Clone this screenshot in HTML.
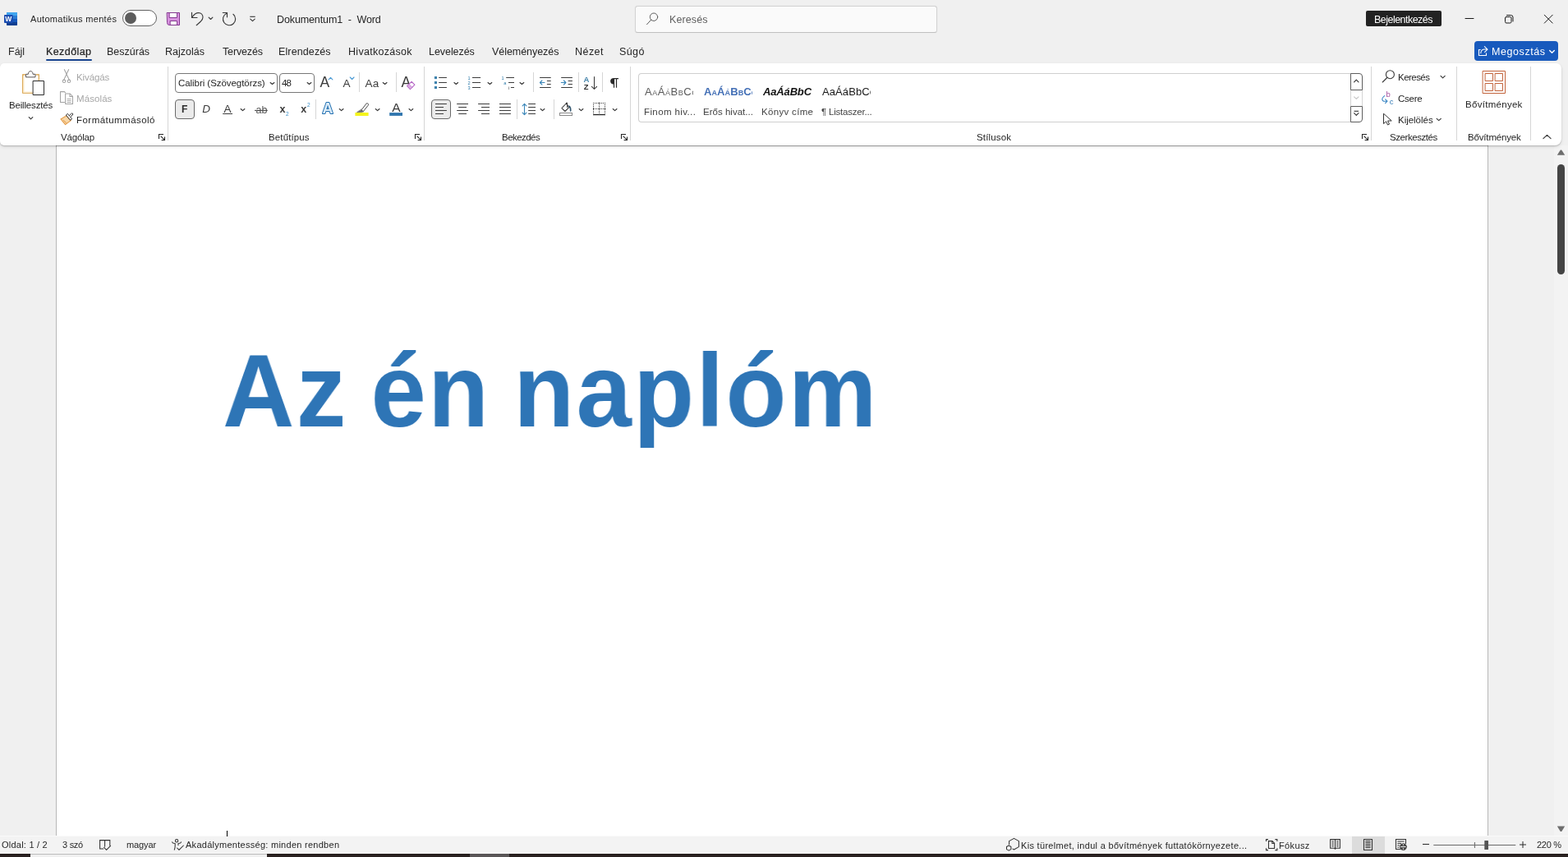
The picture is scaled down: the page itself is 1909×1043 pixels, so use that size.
<!DOCTYPE html>
<html lang="hu">
<head>
<meta charset="utf-8">
<title>Dokumentum1 - Word</title>
<style>
*{box-sizing:border-box;margin:0;padding:0}
html,body{width:1909px;height:1043px;overflow:hidden}
body{position:relative;background:#f0f0f0;font-family:"Liberation Sans",sans-serif;font-size:12px;color:#242424}
.a{position:absolute}
.t{position:absolute;white-space:nowrap;line-height:20px;height:20px;will-change:transform}
svg{position:absolute;overflow:visible;will-change:transform}
#ribbon{left:0;top:77px;width:1901px;height:100px;background:#fff;border-radius:5px 6px 8px 5px;box-shadow:0 1px 1.5px rgba(0,0,0,.2),0 2px 4px rgba(0,0,0,.09)}
.gsep{position:absolute;top:81px;width:1px;height:90px;background:#d6d6d6}
.sep{position:absolute;width:1px;height:24px;background:#d6d6d6}
#docbg{left:0;top:177px;width:1909px;height:841px;background:#f0f0f0}
#page{left:68px;top:170px;width:1744px;height:848px;background:#fff;border-left:1px solid #b8b8b8;border-right:1px solid #b8b8b8}
#status{left:0;top:1017px;width:1909px;height:22px;background:#f3f3f3;border-top:1px solid #fafafa;border-bottom:1px solid #fbfbfb}
#strip{left:0;top:1039px;width:1909px;height:4px;background:#292120}
.box{position:absolute;border:1px solid #787878;border-radius:4px;background:#fff}
.sel{position:absolute;border:1px solid #6a6a6a;border-radius:4px;background:#ebebeb}
.big{position:absolute;will-change:transform;white-space:nowrap;font-weight:bold;color:#2e75b6;line-height:160px;height:160px}
</style>
</head>
<body>
<div class="a" id="docbg"></div>
<div class="a" id="page"></div>
<div class="a" id="scrolltrack" style="left:1892px;top:177px;width:17px;height:841px;background:#f3f3f3"></div>
<div class="a" id="thumb" style="left:1896px;top:200px;width:9px;height:134px;background:#454545;border-radius:4.5px"></div>
<div class="a" id="ribbon"></div>
<div class="a" id="pagetop" style="left:68px;top:177px;width:1744px;height:1px;background:rgba(0,0,0,.22)"></div>
<div class="a" id="status"></div>
<div class="a" id="strip"></div>

<div class="a" style="left:37px;top:1039px;width:288px;height:4px;background:#efefef;border-top:1px solid #b9b9b9"></div>
<div class="a" style="left:572px;top:1039px;width:48px;height:4px;background:#5a5657"></div>
<div class="a" style="left:1646px;top:1018px;width:40px;height:21px;background:#dcdcdc"></div>
<div class="a" style="left:773px;top:7px;width:368px;height:33px;background:#fafafa;border:1px solid #d2d2d2;border-bottom-color:#c0c0c0;border-radius:3.5px;box-shadow:0 0 1px rgba(0,0,0,.10)"></div>
<div class="a" style="left:149px;top:12px;width:42px;height:20px;border:1px solid #616161;border-radius:10px;background:#fff"></div>
<div class="a" style="left:152px;top:15px;width:14px;height:14px;border-radius:7px;background:#5c5c5c"></div>
<div class="a" style="left:1663px;top:13px;width:92px;height:19px;background:#222;border-radius:2px"></div>
<div class="a" style="left:1795px;top:50px;width:102px;height:24px;background:#185abd;border-radius:4px"></div>
<div class="a" style="left:56px;top:72px;width:56px;height:2px;background:#17448f;border-radius:1px"></div>
<div class="gsep" style="left:204px"></div>
<div class="gsep" style="left:516px"></div>
<div class="gsep" style="left:767px"></div>
<div class="gsep" style="left:1669px"></div>
<div class="gsep" style="left:1773px"></div>
<div class="gsep" style="left:1863px"></div>
<div class="sep" style="left:437px;top:88px"></div>
<div class="sep" style="left:482px;top:88px"></div>
<div class="sep" style="left:384px;top:121px"></div>
<div class="sep" style="left:649px;top:88px"></div>
<div class="sep" style="left:704px;top:88px"></div>
<div class="sep" style="left:733px;top:88px"></div>
<div class="sep" style="left:629px;top:121px"></div>
<div class="sep" style="left:674px;top:121px"></div>
<div class="box" style="left:213px;top:89px;width:125px;height:24px"></div>
<div class="box" style="left:340px;top:89px;width:43px;height:24px"></div>
<div class="sel" style="left:213px;top:121px;width:24px;height:24px"></div>
<div class="sel" style="left:525px;top:121px;width:24px;height:24px"></div>
<div class="a" style="left:777px;top:89px;width:868px;height:60px;border:1px solid #cfcfcf;border-right:none;border-radius:4px 0 0 4px;background:#fff"></div>
<div class="a" style="left:1644px;top:109px;width:15px;height:21px;border-left:1px solid #d4d4d4;border-right:1px solid #d4d4d4;background:#fff"></div>
<div class="a" style="left:1644px;top:89px;width:15px;height:21px;border:1px solid #5e5e5e;border-radius:0 4px 0 0;background:#fff"></div>
<div class="a" style="left:1644px;top:129px;width:15px;height:20px;border:1px solid #5e5e5e;border-radius:0 0 4px 0;background:#fff"></div>
<div class="a" style="left:276px;top:1011px;width:1px;height:7px;background:#000"></div>

<span class="t" id="autosave" style="left:36.80px;top:13.19px;font-size:11px;color:#242424;letter-spacing:0.308px;">Automatikus mentés</span>
<span class="t" id="title" style="left:336.80px;top:13.67px;font-size:12.5px;color:#242424;letter-spacing:-0.114px;white-space:pre;">Dokumentum1  -  Word</span>
<span class="t" id="searchph" style="left:814.80px;top:13.67px;font-size:12.5px;color:#616161;letter-spacing:0.105px;">Keresés</span>
<span class="t" id="signin" style="left:1672.80px;top:13.67px;font-size:12.5px;color:#ffffff;letter-spacing:-0.525px;">Bejelentkezés</span>
<span class="t" id="tab0" style="left:9.90px;top:52.67px;font-size:12.5px;color:#242424;">Fájl</span>
<span class="t" id="tab1" style="left:55.80px;top:52.67px;font-size:12.5px;color:#242424;letter-spacing:0.412px;-webkit-text-stroke:0.22px #1c1c1c;">Kezdőlap</span>
<span class="t" id="tab2" style="left:130.00px;top:52.67px;font-size:12.5px;color:#242424;">Beszúrás</span>
<span class="t" id="tab3" style="left:201.00px;top:52.67px;font-size:12.5px;color:#242424;letter-spacing:0.013px;">Rajzolás</span>
<span class="t" id="tab4" style="left:270.60px;top:52.67px;font-size:12.5px;color:#242424;letter-spacing:-0.154px;">Tervezés</span>
<span class="t" id="tab5" style="left:339.20px;top:52.67px;font-size:12.5px;color:#242424;letter-spacing:0.120px;">Elrendezés</span>
<span class="t" id="tab6" style="left:424.20px;top:52.67px;font-size:12.5px;color:#242424;letter-spacing:0.286px;">Hivatkozások</span>
<span class="t" id="tab7" style="left:522.40px;top:52.67px;font-size:12.5px;color:#242424;letter-spacing:-0.056px;">Levelezés</span>
<span class="t" id="tab8" style="left:599.00px;top:52.67px;font-size:12.5px;color:#242424;letter-spacing:-0.049px;">Véleményezés</span>
<span class="t" id="tab9" style="left:699.90px;top:52.67px;font-size:12.5px;color:#242424;letter-spacing:0.450px;">Nézet</span>
<span class="t" id="tab10" style="left:754.40px;top:52.67px;font-size:12.5px;color:#242424;letter-spacing:0.390px;">Súgó</span>
<span class="t" id="share" style="left:1815.50px;top:52.67px;font-size:12.5px;color:#ffffff;letter-spacing:0.584px;">Megosztás</span>
<span class="t" id="paste" style="left:10.76px;top:118.02px;font-size:11.5px;color:#242424;letter-spacing:-0.174px;">Beillesztés</span>
<span class="t" id="cut" style="left:93.10px;top:84.02px;font-size:11.5px;color:#a6a6a6;letter-spacing:-0.090px;">Kivágás</span>
<span class="t" id="copy" style="left:93.10px;top:110.02px;font-size:11.5px;color:#a6a6a6;letter-spacing:0.090px;">Másolás</span>
<span class="t" id="fmtp" style="left:92.80px;top:136.02px;font-size:11.5px;color:#242424;letter-spacing:0.463px;">Formátummásoló</span>
<span class="t" id="g1" style="left:74.20px;top:157.02px;font-size:11.5px;color:#242424;letter-spacing:-0.180px;">Vágólap</span>
<span class="t" id="font" style="left:217.10px;top:91.02px;font-size:11.5px;color:#242424;letter-spacing:-0.053px;">Calibri (Szövegtörzs)</span>
<span class="t" id="fsize" style="left:343.00px;top:91.02px;font-size:11.5px;color:#242424;letter-spacing:-0.990px;">48</span>
<span class="t" id="g2" style="left:327.00px;top:157.02px;font-size:11.5px;color:#242424;letter-spacing:0.124px;">Betűtípus</span>
<span class="t" id="g3" style="left:610.80px;top:157.02px;font-size:11.5px;color:#242424;letter-spacing:-0.540px;">Bekezdés</span>
<span class="t" id="g4" style="left:1188.90px;top:157.02px;font-size:11.5px;color:#242424;letter-spacing:0.154px;">Stílusok</span>
<span class="t" id="g5" style="left:1692.20px;top:157.02px;font-size:11.5px;color:#242424;letter-spacing:-0.432px;">Szerkesztés</span>
<span class="t" id="g6" style="left:1786.80px;top:157.02px;font-size:11.5px;color:#242424;letter-spacing:-0.162px;">Bővítmények</span>
<span class="t" id="addins" style="left:1783.80px;top:117.02px;font-size:11.5px;color:#242424;letter-spacing:0.288px;">Bővítmények</span>
<span class="t" id="find" style="left:1701.50px;top:84.02px;font-size:11.5px;color:#242424;letter-spacing:-0.540px;">Keresés</span>
<span class="t" id="repl" style="left:1702.00px;top:110.02px;font-size:11.5px;color:#242424;letter-spacing:-0.270px;">Csere</span>
<span class="t" id="sel" style="left:1701.90px;top:136.02px;font-size:11.5px;color:#242424;letter-spacing:-0.022px;">Kijelölés</span>
<span class="t" id="s1" style="left:783.50px;top:126.02px;font-size:11.5px;color:#444444;letter-spacing:0.393px;">Finom hiv...</span>
<span class="t" id="s2" style="left:856.20px;top:126.02px;font-size:11.5px;color:#444444;letter-spacing:0.016px;">Erős hivat...</span>
<span class="t" id="s3" style="left:927.20px;top:126.02px;font-size:11.5px;color:#444444;letter-spacing:0.320px;">Könyv címe</span>
<span class="t" id="s4" style="left:1000.40px;top:126.02px;font-size:11.5px;color:#444444;letter-spacing:-0.208px;">¶ Listaszer...</span>
<span class="t" id="st1" style="left:1.80px;top:1018.19px;font-size:11px;color:#262626;letter-spacing:0.229px;">Oldal: 1 / 2</span>
<span class="t" id="st2" style="left:75.90px;top:1018.19px;font-size:11px;color:#262626;letter-spacing:-0.269px;">3 szó</span>
<span class="t" id="st3" style="left:153.80px;top:1018.19px;font-size:11px;color:#262626;letter-spacing:-0.108px;">magyar</span>
<span class="t" id="st4" style="left:225.90px;top:1018.19px;font-size:11px;color:#262626;letter-spacing:0.273px;">Akadálymentesség: minden rendben</span>
<span class="t" id="st5" style="left:1242.80px;top:1019.19px;font-size:11px;color:#262626;letter-spacing:0.311px;">Kis türelmet, indul a bővítmények futtatókörnyezete...</span>
<span class="t" id="st6" style="left:1557.20px;top:1019.19px;font-size:11px;color:#262626;letter-spacing:0.360px;">Fókusz</span>
<span class="t" id="st7" style="left:1871.20px;top:1018.19px;font-size:11px;color:#262626;letter-spacing:-0.270px;">220 %</span>
<span class="big" id="big" style="left:270.80px;top:395.84px;font-size:126px;letter-spacing:2.50px;word-spacing:-8.50px;transform:scaleX(0.96);transform-origin:0 0">Az én naplóm</span>
<div class="a pv" style="left:785.4px;top:98px;width:58.8px;height:24px;overflow:hidden"><span class="t" style="left:0;top:3.5px;font-size:13px;color:#595959;font-variant:small-caps;letter-spacing:.55px">AaÁáBbCcDd</span></div>
<div class="a pv" style="left:857.4px;top:98px;width:58.8px;height:24px;overflow:hidden"><span class="t" style="left:0;top:3.5px;font-size:13px;color:#4470b6;font-variant:small-caps;font-weight:bold;letter-spacing:.1px">AaÁáBbCcDd</span></div>
<div class="a pv" style="left:929.4px;top:98px;width:58.8px;height:24px;overflow:hidden"><span class="t" style="left:0;top:3.5px;font-size:13px;color:#111;font-weight:bold;font-style:italic;letter-spacing:-.15px">AaÁáBbCcDd</span></div>
<div class="a pv" style="left:1001.4px;top:98px;width:58.8px;height:24px;overflow:hidden"><span class="t" style="left:0;top:3.5px;font-size:13px;color:#1a1a1a;letter-spacing:.1px">AaÁáBbCcDd</span></div>
<!-- title bar icons -->
<svg style="left:0;top:0" width="1909" height="46" viewBox="0 0 1909 46" fill="none" stroke-linecap="round" stroke-linejoin="round">
<rect x="8" y="15" width="13" height="16" rx="1" fill="#2b7cd3"/>
<path d="M8 19 V16 Q8 15 9 15 H20 Q21 15 21 16 V19 Z" fill="#41a5ee"/>
<rect x="8" y="23" width="13" height="4" fill="#185abd"/>
<path d="M8 27 H21 V30 Q21 31 20 31 H9 Q8 31 8 30 Z" fill="#103f91"/>
<rect x="5" y="18" width="10.7" height="10" rx="1" fill="#1b4db0"/>
<text x="10.3" y="26.3" font-family="Liberation Sans, sans-serif" font-size="8.5" font-weight="bold" fill="#fff" text-anchor="middle">W</text>
<!-- save -->
<path d="M203.5 15.5 H218.5 V30.5 H206.2 Q203.5 30.5 203.5 27.8 Z" fill="#d892df" stroke="#843b90" stroke-width="1"/>
<rect x="206.5" y="15.5" width="9" height="6" fill="#fff" stroke="#843b90" stroke-width="1"/>
<rect x="207.5" y="25.5" width="8" height="5" fill="#fff" stroke="#843b90" stroke-width="1"/>
<!-- undo -->
<g stroke="#3a3a3a" stroke-width="1.15">
<path d="M233.5 15.3 V21.5 H240"/>
<path d="M233.8 21.2 C236 17.6 239 15.6 241.8 15.6 C244.8 15.6 247 18 247 21 C247 23.3 245.8 24.8 244.2 26.3 L239.2 30.7"/>
<path d="M254.1 21.2 L256.5 23.5 L258.9 21.2"/>
<!-- redo -->
<path d="M271.3 15.5 H276.5 V20.8"/>
<path d="M283.9 17.3 A7.6 7.6 0 1 1 275.6 16.4"/>
<!-- customize -->
<path d="M304.3 20.3 H310.7" stroke-linecap="butt"/>
<path d="M304.8 23.1 L307.5 25.7 L310.2 23.1"/>
</g>
<!-- search icon in box -->
<g stroke="#5e5e5e" stroke-width="1">
<circle cx="796" cy="20.7" r="4.7"/>
<path d="M792.6 24.2 L787.5 29.8"/>
</g>
<!-- window controls -->
<g stroke="#1a1a1a" stroke-width="1">
<path d="M1784 22.5 H1794"/>
<rect x="1832.5" y="20.5" width="7.5" height="7.5" rx="1.5"/>
<path d="M1834.5 18.5 H1839.5 Q1842 18.5 1842 21 V26"/>
<path d="M1880.3 18.2 L1890.2 28.1 M1890.2 18.2 L1880.3 28.1"/>
</g>
</svg>
<!-- ribbon: clipboard group -->
<svg style="left:0;top:77px" width="210" height="100" viewBox="0 77 210 100" fill="none" stroke-linecap="round" stroke-linejoin="round">
<!-- paste -->
<path d="M31 90.9 H27.7 V113.3 H40.5 M43.5 90.9 H47.3 V98" stroke="#d69c3c" stroke-width="1.1" stroke-linecap="butt" stroke-linejoin="miter"/>
<path d="M28.9 92 V112.2 H40" stroke="#fce9c6" stroke-width="1.2" stroke-linecap="butt"/>
<path d="M31.5 93.5 V90.3 H34.3 C34.3 88 35.6 86.6 37.2 86.6 C38.8 86.6 40.1 88 40.1 90.3 H43 V93.5 Z" fill="#fff" stroke="#5a5555" stroke-width="1"/>
<rect x="40.5" y="98.5" width="13" height="17" fill="#fff" stroke="#2e2e2e" stroke-width="1"/>
<path d="M35.2 142.6 L37.5 144.9 L39.8 142.6" stroke="#333" stroke-width="1.1"/>
<!-- cut -->
<g stroke="#a3a3a3" stroke-width="1.05">
<path d="M78.3 84.6 L84.3 97.2 M83.7 84.6 L77.7 97.2"/>
<circle cx="78" cy="98.8" r="1.7"/>
<circle cx="84" cy="98.8" r="1.7"/>
</g>
<!-- copy -->
<g stroke="#a3a3a3" stroke-width="1.05">
<path d="M78.5 124.5 H73.5 V111.6 H78.5 L79.6 112.8"/>
<path d="M79.6 114 H85.3 L88.5 117.3 V126.5 H79.6 Z" fill="#fff"/>
<path d="M85 114.2 V117.5 H88.3"/>
<path d="M82 120.5 H86.2 M82 122.5 H86.2 M82 124.5 H86.2" stroke-width=".9"/>
</g>
<!-- format painter -->
<path d="M74 145 L81.2 140.6 L86.2 146.6 L79.6 151.6 Z" fill="#f8d7a8" stroke="#e39a45" stroke-width="1.1"/>
<path d="M77 146.2 L80.5 149.4" stroke="#e39a45" stroke-width="1"/>
<path d="M80.6 139.8 L82.4 138.4 L87.6 144.7 L85.9 146.1 Z" fill="#fff" stroke="#333" stroke-width="1"/>
<path d="M84.3 140.9 L87.6 137.6 L89 139 L85.8 142.4" fill="#fff" stroke="#333" stroke-width="1"/>
<!-- launcher -->
<g stroke="#262626" stroke-width="1.1" stroke-linecap="butt" stroke-linejoin="miter">
<path d="M193.5 169 V163.5 H199"/>
<path d="M195.6 165.6 L200.2 170.2 M200.5 166.6 V170.5 H196.6"/>
</g>
</svg>

<!-- ribbon: font + paragraph + editing icons -->
<svg style="left:0;top:77px" width="1909" height="100" viewBox="0 77 1909 100" fill="none" stroke-linecap="round" stroke-linejoin="round">
<path d="M329.1 100.5 L331.5 102.5 L333.9 100.5" stroke="#333" stroke-width="1.1"/>
<path d="M374.1 100.5 L376.5 102.5 L378.9 100.5" stroke="#333" stroke-width="1.1"/>
<text x="389.6" y="105.7" font-family="Liberation Sans, sans-serif" font-size="17.5" fill="#3b3b3b">A</text>
<path d="M400.1 96.8 L402.5 94.3 L404.9 96.8" stroke="#4a9ad4" stroke-width="1.1"/>
<text x="417.4" y="105.7" font-family="Liberation Sans, sans-serif" font-size="13.5" fill="#3b3b3b">A</text>
<path d="M426.2 94.0 L428.6 96.5 L431.0 94.0" stroke="#4a9ad4" stroke-width="1.1"/>
<text x="444.4" y="105.7" font-family="Liberation Sans, sans-serif" font-size="13.5" fill="#3b3b3b" letter-spacing="0.4">Aa</text>
<path d="M466.2 100.5 L468.6 102.5 L471.0 100.5" stroke="#333" stroke-width="1.1"/>
<text x="488.4" y="105.7" font-family="Liberation Sans, sans-serif" font-size="17.5" fill="#3b3b3b">A</text>
<path d="M495.6 104.6 L501.1 99.3 L504.9 103.2 L499.4 108.6 Z" fill="#fff" stroke="#b565c5" stroke-width="1.1"/>
<path d="M497.9 102.4 L501.7 106.3" stroke="#b565c5" stroke-width="1"/>
<path d="M496.4 104.7 L498 103.2 L500.9 106.2 L499.4 107.7 Z" fill="#d9a3e0" stroke="none"/>
<text x="221.1" y="137" font-family="Liberation Sans, sans-serif" font-size="13.5" font-weight="bold" fill="#2b2b2b" textLength="7.4" lengthAdjust="spacingAndGlyphs">F</text>
<text x="246.2" y="137" font-family="Liberation Sans, sans-serif" font-size="13.5" font-style="italic" fill="#3b3b3b">D</text>
<text x="272.4" y="136.6" font-family="Liberation Sans, sans-serif" font-size="13.5" fill="#3b3b3b">A</text>
<path d="M271.2 138.5 H283.0" stroke="#3b3b3b" stroke-width="1" stroke-linecap="butt"/>
<path d="M293.1 132.5 L295.5 134.7 L297.9 132.5" stroke="#333" stroke-width="1.1"/>
<text x="311.6" y="137.6" font-family="Liberation Sans, sans-serif" font-size="12.5" fill="#555">ab</text>
<path d="M310.0 134.4 H325.8" stroke="#444" stroke-width="1" stroke-linecap="butt"/>
<text x="340.4" y="137" font-family="Liberation Sans, sans-serif" font-size="12.5" font-weight="bold" fill="#3b3b3b">x</text>
<text x="347.9" y="141" font-family="Liberation Sans, sans-serif" font-size="6.5" fill="#3a8fc8">2</text>
<text x="366.3" y="137" font-family="Liberation Sans, sans-serif" font-size="12.5" font-weight="bold" fill="#3b3b3b">x</text>
<text x="373.9" y="129.8" font-family="Liberation Sans, sans-serif" font-size="6.5" fill="#3a8fc8">2</text>
<text x="392.5" y="138.4" font-family="Liberation Sans, sans-serif" font-size="18" font-weight="bold" fill="#dcecf8" stroke="#1f6eb0" stroke-width="2" paint-order="stroke">A</text>
<path d="M413.2 132.5 L415.6 134.7 L418.0 132.5" stroke="#333" stroke-width="1.1"/>
<rect x="432.4" y="137" width="16.2" height="4" fill="#f4f41c"/>
<path d="M440.2 133.6 L446 126.1 Q446.9 125.2 447.8 126 L448.2 126.4 Q449 127.3 448.2 128.2 L442.3 135.6 Z" fill="#fff" stroke="#4a4a4a" stroke-width="1"/>
<path d="M440 133.4 L442.5 135.8 L439.8 136.6 L435 136.6 Z" fill="#6a6a6a" stroke="#6a6a6a" stroke-width=".8"/>
<path d="M457.2 132.5 L459.6 134.7 L462.0 132.5" stroke="#333" stroke-width="1.1"/>
<text x="477.3" y="136" font-family="Liberation Sans, sans-serif" font-size="15.5" fill="#3b3b3b">A</text>
<rect x="474.2" y="137.1" width="15.8" height="3.8" fill="#2f75ad"/>
<path d="M498.0 132.5 L500.4 134.7 L502.8 132.5" stroke="#333" stroke-width="1.1"/>
<g stroke="#262626" stroke-width="1.1" stroke-linecap="butt" stroke-linejoin="miter"><path d="M505.5 169.0 V163.5 H511.0"/><path d="M507.6 165.6 L512.2 170.2 M512.5 166.6 V170.5 H508.6"/></g>
<rect x="528.9" y="93.0" width="3.1" height="3.1" fill="#3f83ad"/>
<path d="M534.2 94.5 H543.9" stroke="#3b3b3b" stroke-width="1" stroke-linecap="butt"/>
<rect x="528.9" y="99.0" width="3.1" height="3.1" fill="#3f83ad"/>
<path d="M534.2 100.5 H543.9" stroke="#3b3b3b" stroke-width="1" stroke-linecap="butt"/>
<rect x="528.9" y="105.0" width="3.1" height="3.1" fill="#3f83ad"/>
<path d="M534.2 106.5 H543.9" stroke="#3b3b3b" stroke-width="1" stroke-linecap="butt"/>
<path d="M552.9 100.5 L555.3 102.5 L557.6 100.5" stroke="#333" stroke-width="1.1"/>
<text x="569.6" y="96.5" font-family="Liberation Sans, sans-serif" font-size="5.6" fill="#2f7cab">1</text>
<path d="M575.0 94.5 H585.1" stroke="#3b3b3b" stroke-width="1" stroke-linecap="butt"/>
<text x="569.6" y="102.5" font-family="Liberation Sans, sans-serif" font-size="5.6" fill="#2f7cab">2</text>
<path d="M575.0 100.5 H585.1" stroke="#3b3b3b" stroke-width="1" stroke-linecap="butt"/>
<text x="569.6" y="108.5" font-family="Liberation Sans, sans-serif" font-size="5.6" fill="#2f7cab">3</text>
<path d="M575.0 106.5 H585.1" stroke="#3b3b3b" stroke-width="1" stroke-linecap="butt"/>
<path d="M594.0 100.5 L596.4 102.5 L598.8 100.5" stroke="#333" stroke-width="1.1"/>
<text x="610.6" y="96.6" font-family="Liberation Sans, sans-serif" font-size="5.6" fill="#2f7cab">1</text>
<path d="M616.2 94.5 H626.0" stroke="#3b3b3b" stroke-width="1" stroke-linecap="butt"/>
<text x="613.3" y="102.6" font-family="Liberation Sans, sans-serif" font-size="5.6" fill="#2f7cab">a</text>
<path d="M619.0 100.5 H626.0" stroke="#3b3b3b" stroke-width="1" stroke-linecap="butt"/>
<text x="618.9" y="108.6" font-family="Liberation Sans, sans-serif" font-size="5.6" fill="#3b3b3b">i</text>
<path d="M621.9 106.5 H626.0" stroke="#3b3b3b" stroke-width="1" stroke-linecap="butt"/>
<path d="M633.0 100.5 L635.4 102.5 L637.8 100.5" stroke="#333" stroke-width="1.1"/>
<path d="M657.1 94.5 H670.7" stroke="#3b3b3b" stroke-width="1" stroke-linecap="butt"/>
<path d="M657.1 106.5 H670.7" stroke="#3b3b3b" stroke-width="1" stroke-linecap="butt"/>
<path d="M665.9 98.5 H670.7" stroke="#3b3b3b" stroke-width="1" stroke-linecap="butt"/>
<path d="M665.9 102.5 H670.7" stroke="#3b3b3b" stroke-width="1" stroke-linecap="butt"/>
<path d="M663 100.5 H657.5 M659.9 98 L657.4 100.5 L659.9 103" stroke="#3a86b8" stroke-width="1.1"/>
<path d="M683.2 94.5 H696.9" stroke="#3b3b3b" stroke-width="1" stroke-linecap="butt"/>
<path d="M683.2 106.5 H696.9" stroke="#3b3b3b" stroke-width="1" stroke-linecap="butt"/>
<path d="M691.6 98.5 H696.9" stroke="#3b3b3b" stroke-width="1" stroke-linecap="butt"/>
<path d="M691.6 102.5 H696.9" stroke="#3b3b3b" stroke-width="1" stroke-linecap="butt"/>
<path d="M683.3 100.5 H688.8 M686.4 98 L688.9 100.5 L686.4 103" stroke="#3a86b8" stroke-width="1.1"/>
<text x="710.6" y="99.8" font-family="Liberation Sans, sans-serif" font-size="9.6" font-weight="bold" fill="#4685ab">A</text>
<text x="710.8" y="108.7" font-family="Liberation Sans, sans-serif" font-size="9.4" font-weight="bold" fill="#333">Z</text>
<path d="M723.5 93.4 V108.3 M720.4 105.3 L723.5 108.4 L726.6 105.3" stroke="#3b3b3b" stroke-width="1.05"/>
<path d="M747.5 95 H753 V96.2 H751.1 V106.8 H749.9 V96.2 H748.1 V106.8 H746.9 V102.4 C744.6 102.4 743.1 100.8 743.1 98.7 C743.1 96.6 744.6 95 747.5 95 Z" fill="#2b2b2b" stroke="none"/>
<path d="M530.0 126.5 H543.9" stroke="#3b3b3b" stroke-width="1" stroke-linecap="butt"/>
<path d="M556.2 126.5 H570.0" stroke="#3b3b3b" stroke-width="1" stroke-linecap="butt"/>
<path d="M582.1 126.5 H596.0" stroke="#3b3b3b" stroke-width="1" stroke-linecap="butt"/>
<path d="M608.0 126.5 H621.9" stroke="#3b3b3b" stroke-width="1" stroke-linecap="butt"/>
<path d="M530.0 130.5 H540.0" stroke="#3b3b3b" stroke-width="1" stroke-linecap="butt"/>
<path d="M558.2 130.5 H568.0" stroke="#3b3b3b" stroke-width="1" stroke-linecap="butt"/>
<path d="M586.0 130.5 H596.0" stroke="#3b3b3b" stroke-width="1" stroke-linecap="butt"/>
<path d="M608.0 130.5 H621.9" stroke="#3b3b3b" stroke-width="1" stroke-linecap="butt"/>
<path d="M530.0 134.5 H543.9" stroke="#3b3b3b" stroke-width="1" stroke-linecap="butt"/>
<path d="M556.2 134.5 H570.0" stroke="#3b3b3b" stroke-width="1" stroke-linecap="butt"/>
<path d="M582.1 134.5 H596.0" stroke="#3b3b3b" stroke-width="1" stroke-linecap="butt"/>
<path d="M608.0 134.5 H621.9" stroke="#3b3b3b" stroke-width="1" stroke-linecap="butt"/>
<path d="M530.0 138.5 H540.0" stroke="#3b3b3b" stroke-width="1" stroke-linecap="butt"/>
<path d="M558.2 138.5 H568.0" stroke="#3b3b3b" stroke-width="1" stroke-linecap="butt"/>
<path d="M586.0 138.5 H596.0" stroke="#3b3b3b" stroke-width="1" stroke-linecap="butt"/>
<path d="M608.0 138.5 H621.9" stroke="#3b3b3b" stroke-width="1" stroke-linecap="butt"/>
<path d="M643.2 126.5 H652.0" stroke="#3b3b3b" stroke-width="1" stroke-linecap="butt"/>
<path d="M643.2 130.5 H652.0" stroke="#3b3b3b" stroke-width="1" stroke-linecap="butt"/>
<path d="M643.2 134.5 H652.0" stroke="#3b3b3b" stroke-width="1" stroke-linecap="butt"/>
<path d="M643.2 138.5 H652.0" stroke="#3b3b3b" stroke-width="1" stroke-linecap="butt"/>
<path d="M638.5 126.4 V139.6 M636.1 128.8 L638.5 126.3 L640.9 128.8 M636.1 137.2 L638.5 139.7 L640.9 137.2" stroke="#3a86b8" stroke-width="1.1"/>
<path d="M658.1 132.5 L660.5 134.7 L662.9 132.5" stroke="#333" stroke-width="1.1"/>
<rect x="681.5" y="137.5" width="15" height="3" fill="#fff" stroke="#8a8a8a" stroke-width="1" stroke-linejoin="miter"/>
<path d="M683.9 131.6 L689.3 126 L692.8 130.7 L687.9 135.5 Z" fill="#fff" stroke="#3b3b3b" stroke-width="1.05"/>
<path d="M689.2 126.3 Q689.3 125.1 690 125.1 Q690.6 125.1 690.6 126.3 V130.4" stroke="#3b3b3b" stroke-width="1.05"/>
<path d="M692.8 129.2 Q695 130.8 694.7 135" stroke="#33566e" stroke-width="1.6"/>
<path d="M705.1 132.5 L707.5 134.7 L709.9 132.5" stroke="#333" stroke-width="1.1"/>
<path d="M722 125.5 H737 M722 132.5 H737 M722.5 125 V139 M729.5 125 V139 M736.5 125 V139" stroke="#333" stroke-width="1" stroke-dasharray="1 1" stroke-linecap="butt" shape-rendering="crispEdges"/>
<path d="M722 139.5 H737" stroke="#1a1a1a" stroke-width="1" stroke-linecap="butt" shape-rendering="crispEdges"/>
<path d="M722 140.2 H737" stroke="#1a1a1a" stroke-width=".5" stroke-linecap="butt" opacity=".5"/>
<path d="M746.2 132.5 L748.6 134.7 L751.0 132.5" stroke="#333" stroke-width="1.1"/>
<g stroke="#262626" stroke-width="1.1" stroke-linecap="butt" stroke-linejoin="miter"><path d="M756.5 169.0 V163.5 H762.0"/><path d="M758.6 165.6 L763.2 170.2 M763.5 166.6 V170.5 H759.6"/></g>
<path d="M1648.6 99.8 L1651.3 97.1 L1654.0 99.8" stroke="#333" stroke-width="1.1"/>
<path d="M1648.6 117.8 L1651.3 120.4 L1654.0 117.8" stroke="#c4c4c4" stroke-width="1.1"/>
<path d="M1648.5 135.3 H1654.1" stroke="#333" stroke-width="1.1" stroke-linecap="butt"/>
<path d="M1648.6 137.7 L1651.3 140.3 L1654.0 137.7" stroke="#333" stroke-width="1.1"/>
<g stroke="#262626" stroke-width="1.1" stroke-linecap="butt" stroke-linejoin="miter"><path d="M1658.5 169.0 V163.5 H1664.0"/><path d="M1660.6 165.6 L1665.2 170.2 M1665.5 166.6 V170.5 H1661.6"/></g>
<circle cx="1692.4" cy="90.7" r="5" stroke="#3b3b3b" stroke-width="1.1"/>
<path d="M1688.7 94.5 L1683.2 100" stroke="#3b3b3b" stroke-width="1.1"/>
<path d="M1754.0 92.4 L1756.6 94.8 L1759.2 92.4" stroke="#333" stroke-width="1.1"/>
<text x="1687.4" y="118.2" font-family="Liberation Sans, sans-serif" font-size="9.5" fill="#a4509f">b</text>
<text x="1691.8" y="126.5" font-family="Liberation Sans, sans-serif" font-size="9.5" fill="#3a7fb8">c</text>
<path d="M1685.6 116.6 Q1680.6 120.6 1684.4 123.2 H1688.8 M1686.6 120.8 L1689 123.2 L1686.6 125.6" stroke="#3a86c4" stroke-width="1.1"/>
<path d="M1684.5 138.6 V150.6 L1687.6 147.8 L1689.5 152 L1691.5 151.1 L1689.6 147 L1693.8 147 Z" fill="#fff" stroke="#333" stroke-width="1" stroke-linejoin="miter"/>
<path d="M1749.1 144.3 L1751.7 146.7 L1754.3 144.3" stroke="#333" stroke-width="1.1"/>
<rect x="1805.5" y="86.5" width="27" height="27" stroke="#c2633b" stroke-width="1"/>
<rect x="1808.5" y="89.5" width="9" height="9" stroke="#c2633b" stroke-width="1"/>
<rect x="1820.5" y="89.5" width="9" height="9" stroke="#c2633b" stroke-width="1"/>
<rect x="1808.5" y="101.5" width="9" height="9" stroke="#c2633b" stroke-width="1"/>
<rect x="1820.5" y="101.5" width="9" height="9" stroke="#c2633b" stroke-width="1"/>
<path d="M1878.9 168.7 L1883.5 164.3 L1888.1 168.7" stroke="#333" stroke-width="1.1"/>
</svg>
<!-- share icon, scrollbar arrows -->
<svg style="left:1790px;top:46px" width="119" height="34" viewBox="1790 46 119 34" fill="none" stroke-linecap="round" stroke-linejoin="round">
<path d="M1802.6 60.5 H1800.5 V67.5 H1809.5 V64.6" stroke="#fff" stroke-width="1.1" stroke-linecap="butt" stroke-linejoin="miter"/>
<path d="M1802.8 64.6 C1803 61.6 1805 60 1807.6 60 H1810.6 M1807.4 56.6 L1811 60.1 L1807.6 63.4" stroke="#fff" stroke-width="1.1"/>
<path d="M1886.7 61.5 L1889.5 64.2 L1892.3 61.5" stroke="#fff" stroke-width="1.4"/>
</svg>
<svg style="left:1892px;top:178px" width="17" height="840" viewBox="1892 178 17 840">
<path d="M1895.8 188.8 L1899.8 182.4 H1901.2 L1905.2 188.8 Z" fill="#6e6e6e"/>
<path d="M1895.8 1005.5 L1899.8 1011.9 H1901.2 L1905.2 1005.5 Z" fill="#6e6e6e"/>
</svg>
<!-- status bar icons -->
<svg style="left:0;top:1017px" width="1909" height="22" viewBox="0 1017 1909 22" fill="none" stroke-linecap="round" stroke-linejoin="round">
<g stroke="#333" stroke-width="1.05">
<!-- proofing book -->
<path d="M125.8 1033 H121.6 V1022.6 H133.8 V1029" stroke-linejoin="miter"/>
<path d="M127.6 1022.8 V1030.2"/>
<path d="M126.6 1031.4 L129.6 1034.4 L134.6 1029.4"/>
<!-- accessibility -->
<circle cx="215.1" cy="1023.2" r="1.7"/>
<path d="M209.6 1024.8 Q210 1026.2 213.2 1026.6 V1029.6 Q213.2 1031.6 212.3 1034.2 M220.6 1024.8 Q220.2 1026.2 217 1026.6 V1028.6"/>
<path d="M215.6 1032 L218 1034.4 L223.4 1029"/>
<!-- addin loading -->
<path d="M1228.6 1027.4 V1023.6 L1234.5 1020.4 L1240.4 1023.6 V1030.6 L1234.5 1034 L1233 1033.1"/>
<path d="M1228.2 1029 L1230.9 1030.5 V1033.6 L1228.2 1035.1 L1225.5 1033.6 V1030.5 Z"/>
<!-- focus -->
<path d="M1541.5 1024 V1021.6 H1544 M1552.4 1021.6 H1554.9 V1024 M1554.9 1032.2 V1034.6 H1552.4 M1544 1034.6 H1541.5 V1032.2" stroke-linejoin="miter" stroke-linecap="butt"/>
<path d="M1544.5 1023.6 H1549 L1551.6 1026.2 V1032.5 H1544.5 Z M1548.8 1023.8 V1026.4 H1551.4" stroke-linejoin="miter"/>
<!-- read mode -->
<path d="M1625.5 1022.6 V1033.2 M1619.6 1021.6 H1625.5 M1625.5 1021.6 H1631.4 V1032.2 H1626.6 L1625.5 1033.2 L1624.4 1032.2 H1619.6 V1021.6" stroke-linejoin="miter"/>
<path d="M1621.4 1024 H1623.8 M1621.4 1026 H1623.8 M1621.4 1028 H1623.8 M1621.4 1030 H1623.8 M1627.2 1024 H1629.6 M1627.2 1026 H1629.6 M1627.2 1028 H1629.6 M1627.2 1030 H1629.6" stroke-width="1" stroke-linecap="butt"/>
<!-- print layout -->
<rect x="1660.5" y="1021.5" width="10" height="13"/>
<path d="M1662.4 1023.6 H1668.6 M1662.4 1025.6 H1668.6 M1662.4 1027.6 H1668.6 M1662.4 1029.6 H1668.6 M1662.4 1031.6 H1668.6" stroke-width="1" stroke-linecap="butt"/>
<!-- web layout -->
<path d="M1704.6 1033.5 H1699.5 V1021.5 H1711.5 V1026.6" stroke-linejoin="miter"/>
<path d="M1701.4 1024 H1709.6 M1701.4 1026.4 H1706 M1701.4 1028.8 H1703.8 M1701.4 1031.2 H1703.4" stroke-width="1" stroke-linecap="butt"/>
</g>
<circle cx="1708.4" cy="1030.6" r="3.9" fill="#4a4a4a" stroke="#333" stroke-width=".8"/>
<path d="M1705.6 1030.6 H1711.2" stroke="#f3f3f3" stroke-width="1"/>
<path d="M1708.4 1027.6 V1028.6 M1708.4 1032.6 V1033.6" stroke="#f3f3f3" stroke-width=".9"/>
<!-- zoom slider -->
<path d="M1732 1027.5 H1740" stroke="#333" stroke-width="1.1" stroke-linecap="butt"/>
<path d="M1745.3 1028.5 H1845.3" stroke="#5a5a5a" stroke-width=".9" stroke-linecap="butt"/>
<path d="M1795.5 1025 V1032" stroke="#6a6a6a" stroke-width="1" stroke-linecap="butt"/>
<rect x="1807.3" y="1023" width="4.7" height="11" rx=".5" fill="#555"/>
<path d="M1850 1028 H1858 M1854 1024 V1032" stroke="#2a2a2a" stroke-width="1" stroke-linecap="butt"/>
</svg>


</body>
</html>
